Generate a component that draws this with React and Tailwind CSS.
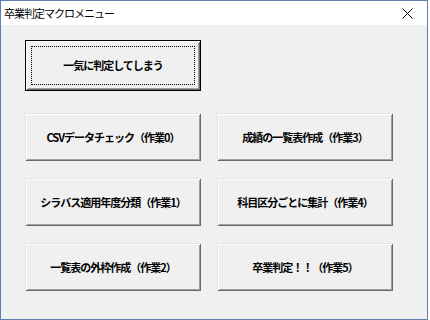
import React from "react";

const font = { fontFamily: '"Noto Sans CJK JP", "Noto Sans", sans-serif' };

function Btn({ label, isDefault }) {
  if (isDefault) {
    return (
      <div className="w-[176px] h-[51px] border border-black bg-[#f0f0f0] shadow-[inset_1px_1px_#ffffff,inset_-1px_-1px_#696969,inset_2px_2px_#f0f0f0,inset_-2px_-2px_#a0a0a0] p-[5px]">
        <div className="w-full h-full border border-dotted border-black flex items-center justify-center">
          <span className="text-[11px] tracking-[-1px] text-black leading-none font-bold" style={font}>{label}</span>
        </div>
      </div>
    );
  }
  return (
    <div className="w-[176px] h-[48px] bg-[#f0f0f0] shadow-[inset_1px_1px_#e3e3e3,inset_-1px_-1px_#696969,inset_2px_2px_#ffffff,inset_-2px_-2px_#a0a0a0] flex items-center justify-center">
      <span className="text-[11px] tracking-[-1px] text-black leading-none font-bold" style={font}>{label}</span>
    </div>
  );
}

export default function App() {
  return (
    <div className="w-[430px] h-[320px] bg-white">
      <div className="w-[428px] h-[320px] border border-[#5b7fae] flex flex-col bg-[#f0f0f0]">
        <div className="h-[24px] bg-white flex items-center justify-between pl-[3px] pr-[14px]">
          <span className="text-[11px] tracking-[-1px] text-black leading-none" style={font}>卒業判定マクロメニュー</span>
          <svg width="11" height="11" viewBox="0 0 11 11">
            <path d="M0.5 0.5 L10.5 10.5 M10.5 0.5 L0.5 10.5" stroke="#000" strokeWidth="1" />
          </svg>
        </div>
        <div className="flex flex-col pl-[24px] pt-[15px]">
          <Btn label="一気に判定してしまう" isDefault />
          <div className="grid grid-cols-[176px_176px] gap-x-[16px] gap-y-[17px] mt-[22px]">
            <Btn label="CSVデータチェック（作業0）" />
            <Btn label="成績の一覧表作成（作業3）" />
            <Btn label="シラバス適用年度分類（作業1）" />
            <Btn label="科目区分ごとに集計（作業4）" />
            <Btn label="一覧表の外枠作成（作業2）" />
            <Btn label="卒業判定！！（作業5）" />
          </div>
        </div>
      </div>
    </div>
  );
}
